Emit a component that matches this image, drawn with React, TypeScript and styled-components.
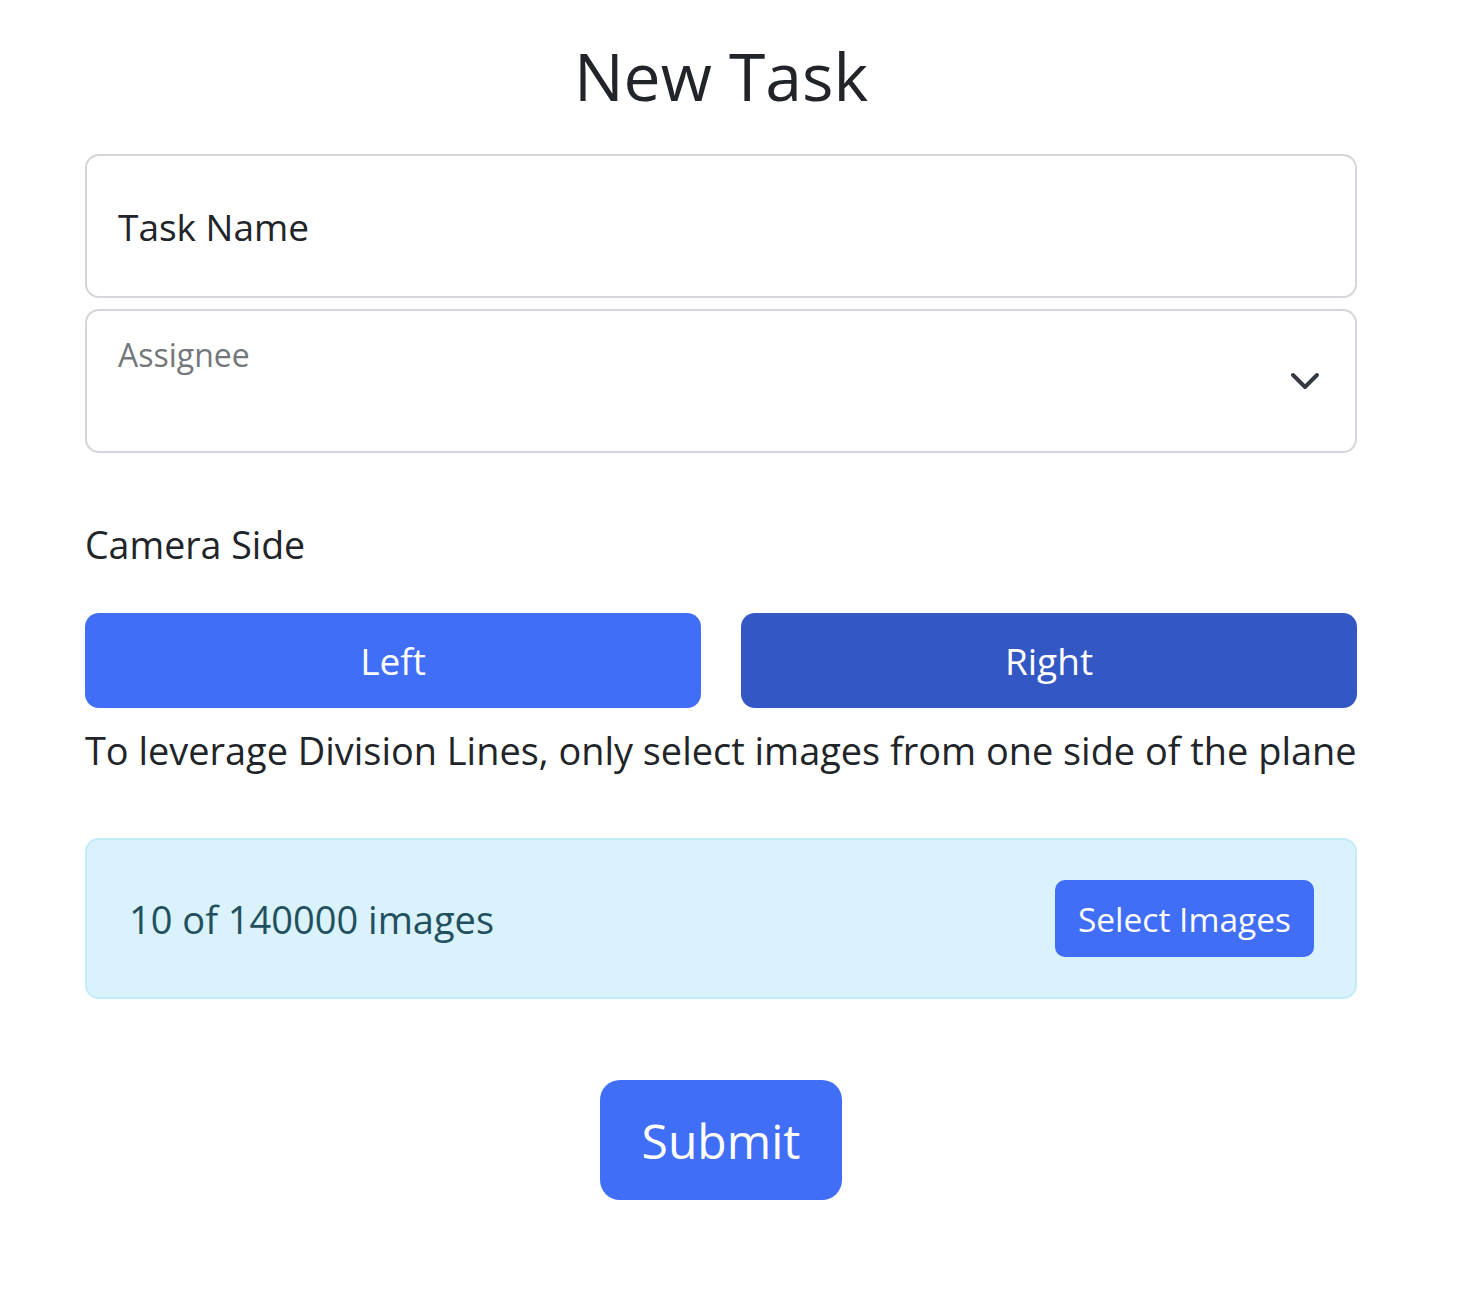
import React from "react";
import styled, { createGlobalStyle } from "styled-components";

const Global = createGlobalStyle`
  html, body { margin: 0; padding: 0; background: #fff; }
  body { font-family: "Open Sans", "Noto Sans", sans-serif; color: #212529; }
  * { box-sizing: border-box; }
`;

const Page = styled.main`
  width: 1272px;
  margin-left: 85px;
  padding-top: 29px;
  display: flex;
  flex-direction: column;
`;

const Title = styled.h1`
  margin: 0 0 33px;
  text-align: center;
  font-size: 66px;
  font-weight: 400;
  line-height: 92px;
  color: #212529;
`;

const Field = styled.div<{ $gap?: number }>`
  position: relative;
  height: 144px;
  border: 2px solid #d3d6da;
  border-radius: 14px;
  background: #fff;
  margin-bottom: ${(p) => p.$gap ?? 0}px;
`;

const TextInput = styled.input`
  width: 100%;
  height: 100%;
  border: none;
  outline: none;
  background: transparent;
  border-radius: 14px;
  padding: 0 31px;
  font-family: inherit;
  font-size: 37px;
  color: #212529;
  &::placeholder { color: #212529; opacity: 1; }
`;

const SelectBox = styled(Field)`
  display: flex;
  align-items: center;
  justify-content: space-between;
  padding: 0 34px 0 31px;
`;

const FloatLabel = styled.span`
  position: absolute;
  left: 31px;
  top: 24px;
  font-size: 32px;
  line-height: 40px;
  color: #74787c;
`;

const Chevron = styled.svg`
  width: 32px;
  height: 32px;
  margin-left: auto;
`;

const SectionLabel = styled.div`
  margin-top: 67px;
  font-size: 37.5px;
  line-height: 50px;
`;

const SideRow = styled.div`
  margin-top: 43px;
  display: grid;
  grid-template-columns: 1fr 1fr;
  gap: 40px;
`;

const SideButton = styled.button<{ $active?: boolean }>`
  height: 95px;
  border: none;
  border-radius: 14px;
  background: ${(p) => (p.$active ? "#3358c4" : "#406ef6")};
  color: #fff;
  font-family: inherit;
  font-size: 37px;
  cursor: pointer;
`;

const Hint = styled.p`
  margin: 17px 0 0;
  font-size: 37.9px;
  line-height: 50px;
  color: #212529;
  white-space: nowrap;
`;

const InfoBox = styled.div`
  margin-top: 63px;
  height: 161px;
  border: 2px solid #c4ebf8;
  border-radius: 14px;
  background: #daf2fb;
  display: flex;
  align-items: center;
  justify-content: space-between;
  padding: 0 41px 0 42px;
`;

const InfoText = styled.span`
  font-size: 38px;
  color: #22505f;
`;

const SmallButton = styled.button`
  height: 77px;
  padding: 0 23px;
  border: none;
  border-radius: 10px;
  background: #406ef6;
  color: #fff;
  font-family: inherit;
  font-size: 33.5px;
  cursor: pointer;
`;

const SubmitRow = styled.div`
  margin-top: 81px;
  display: flex;
  justify-content: center;
`;

const SubmitButton = styled.button`
  width: 242px;
  height: 120px;
  border: none;
  border-radius: 20px;
  background: #406ef6;
  color: #fff;
  font-family: inherit;
  font-size: 48px;
  cursor: pointer;
`;

export default function App() {
  return (
    <>
      <Global />
      <Page>
        <Title>New Task</Title>
        <Field $gap={11}>
          <TextInput placeholder="Task Name" />
        </Field>
        <SelectBox>
          <FloatLabel>Assignee</FloatLabel>
          <Chevron viewBox="0 0 16 16" fill="none">
            <path d="m2 5 6 6 6-6" stroke="#343a40" strokeWidth="2" strokeLinecap="round" strokeLinejoin="round" />
          </Chevron>
        </SelectBox>
        <SectionLabel>Camera Side</SectionLabel>
        <SideRow>
          <SideButton>Left</SideButton>
          <SideButton $active>Right</SideButton>
        </SideRow>
        <Hint>To leverage Division Lines, only select images from one side of the plane</Hint>
        <InfoBox>
          <InfoText>10 of 140000 images</InfoText>
          <SmallButton>Select Images</SmallButton>
        </InfoBox>
        <SubmitRow>
          <SubmitButton>Submit</SubmitButton>
        </SubmitRow>
      </Page>
    </>
  );
}
